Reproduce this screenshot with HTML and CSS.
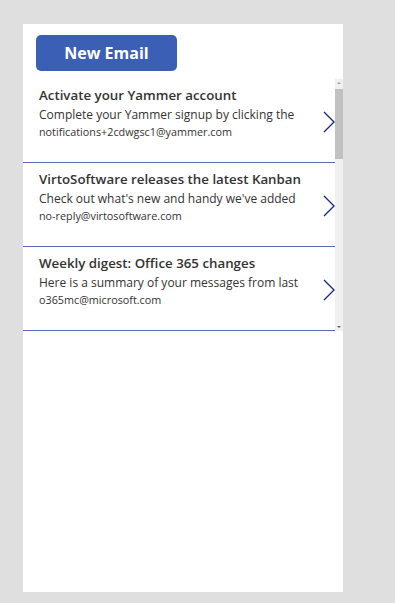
FILE: index.html
```html
<!DOCTYPE html>
<html>
<head>
    <title>Inbox</title>
    <link rel="stylesheet" href="styles.css">
</head>
<body>
    <div class="screen">
        <button class="new-email">New Email</button>
        <div class="gallery">
            <div class="list">
                <div class="row">
                    <div class="text">
                        <div class="subject">Activate your Yammer account</div>
                        <div class="preview">Complete your Yammer signup by clicking the</div>
                        <div class="sender">notifications+2cdwgsc1@yammer.com</div>
                    </div>
                    <svg class="chevron" width="12" height="22" viewBox="0 0 12 22">
                        <path d="M1 1 L11 11 L1 21" fill="none" stroke="#1a2a85" stroke-width="1.4"/>
                    </svg>
                </div>
                <div class="row">
                    <div class="text">
                        <div class="subject">VirtoSoftware releases the latest Kanban</div>
                        <div class="preview">Check out what's new and handy we've added</div>
                        <div class="sender">no-reply@virtosoftware.com</div>
                    </div>
                    <svg class="chevron" width="12" height="22" viewBox="0 0 12 22">
                        <path d="M1 1 L11 11 L1 21" fill="none" stroke="#1a2a85" stroke-width="1.4"/>
                    </svg>
                </div>
                <div class="row">
                    <div class="text">
                        <div class="subject">Weekly digest: Office 365 changes</div>
                        <div class="preview">Here is a summary of your messages from last</div>
                        <div class="sender">o365mc@microsoft.com</div>
                    </div>
                    <svg class="chevron" width="12" height="22" viewBox="0 0 12 22">
                        <path d="M1 1 L11 11 L1 21" fill="none" stroke="#1a2a85" stroke-width="1.4"/>
                    </svg>
                </div>
            </div>
            <div class="scrollbar">
                <span class="arrow up"></span>
                <div class="thumb"></div>
                <span class="arrow down"></span>
            </div>
        </div>
    </div>
</body>
</html>
```

FILE: styles.css
```css
body {
    margin: 0;
    background: #dfdfdf;
    font-family: "Open Sans", "Noto Sans", sans-serif;
    color: #333;
}

.screen {
    width: 320px;
    height: 568px;
    margin: 24px 0 0 23px;
    background: #fff;
    overflow: hidden;
}

.new-email {
    display: block;
    width: 141px;
    height: 36px;
    margin: 11px 0 0 13px;
    padding: 0;
    border: none;
    border-radius: 5px;
    background: #3a5fb4;
    color: #fff;
    font-family: "Open Sans", sans-serif;
    font-size: 16px;
    font-weight: 700;
}

.gallery {
    display: flex;
    height: 252px;
    margin-top: 8px;
}

.list {
    width: 312px;
}

.row {
    box-sizing: border-box;
    height: 84px;
    display: flex;
    align-items: flex-start;
    padding: 7px 0 0 16px;
    border-bottom: 1px solid #5b6cb8;
}

.text {
    flex: 1;
    min-width: 0;
}

.subject {
    font-size: 13.3px;
    font-weight: 600;
    line-height: 18px;
    white-space: nowrap;
}

.preview {
    margin-top: 2px;
    font-size: 12px;
    line-height: 18px;
    white-space: nowrap;
}

.sender {
    margin-top: 2px;
    font-size: 10.8px;
    line-height: 12px;
    white-space: nowrap;
}

.chevron {
    margin: 25px 0 0 3px;
    flex-shrink: 0;
}

.scrollbar {
    width: 8px;
    background: #f0f0f0;
    display: flex;
    flex-direction: column;
    align-items: center;
}

.arrow {
    width: 0;
    height: 0;
    margin: 3px 0;
    border-left: 2px solid transparent;
    border-right: 2px solid transparent;
}

.arrow.up {
    border-bottom: 2px solid #a0a0a0;
}

.arrow.down {
    margin-top: auto;
    border-top: 2px solid #606060;
}

.thumb {
    width: 8px;
    height: 70px;
    margin-top: 2px;
    background: #c1c1c1;
}
```
